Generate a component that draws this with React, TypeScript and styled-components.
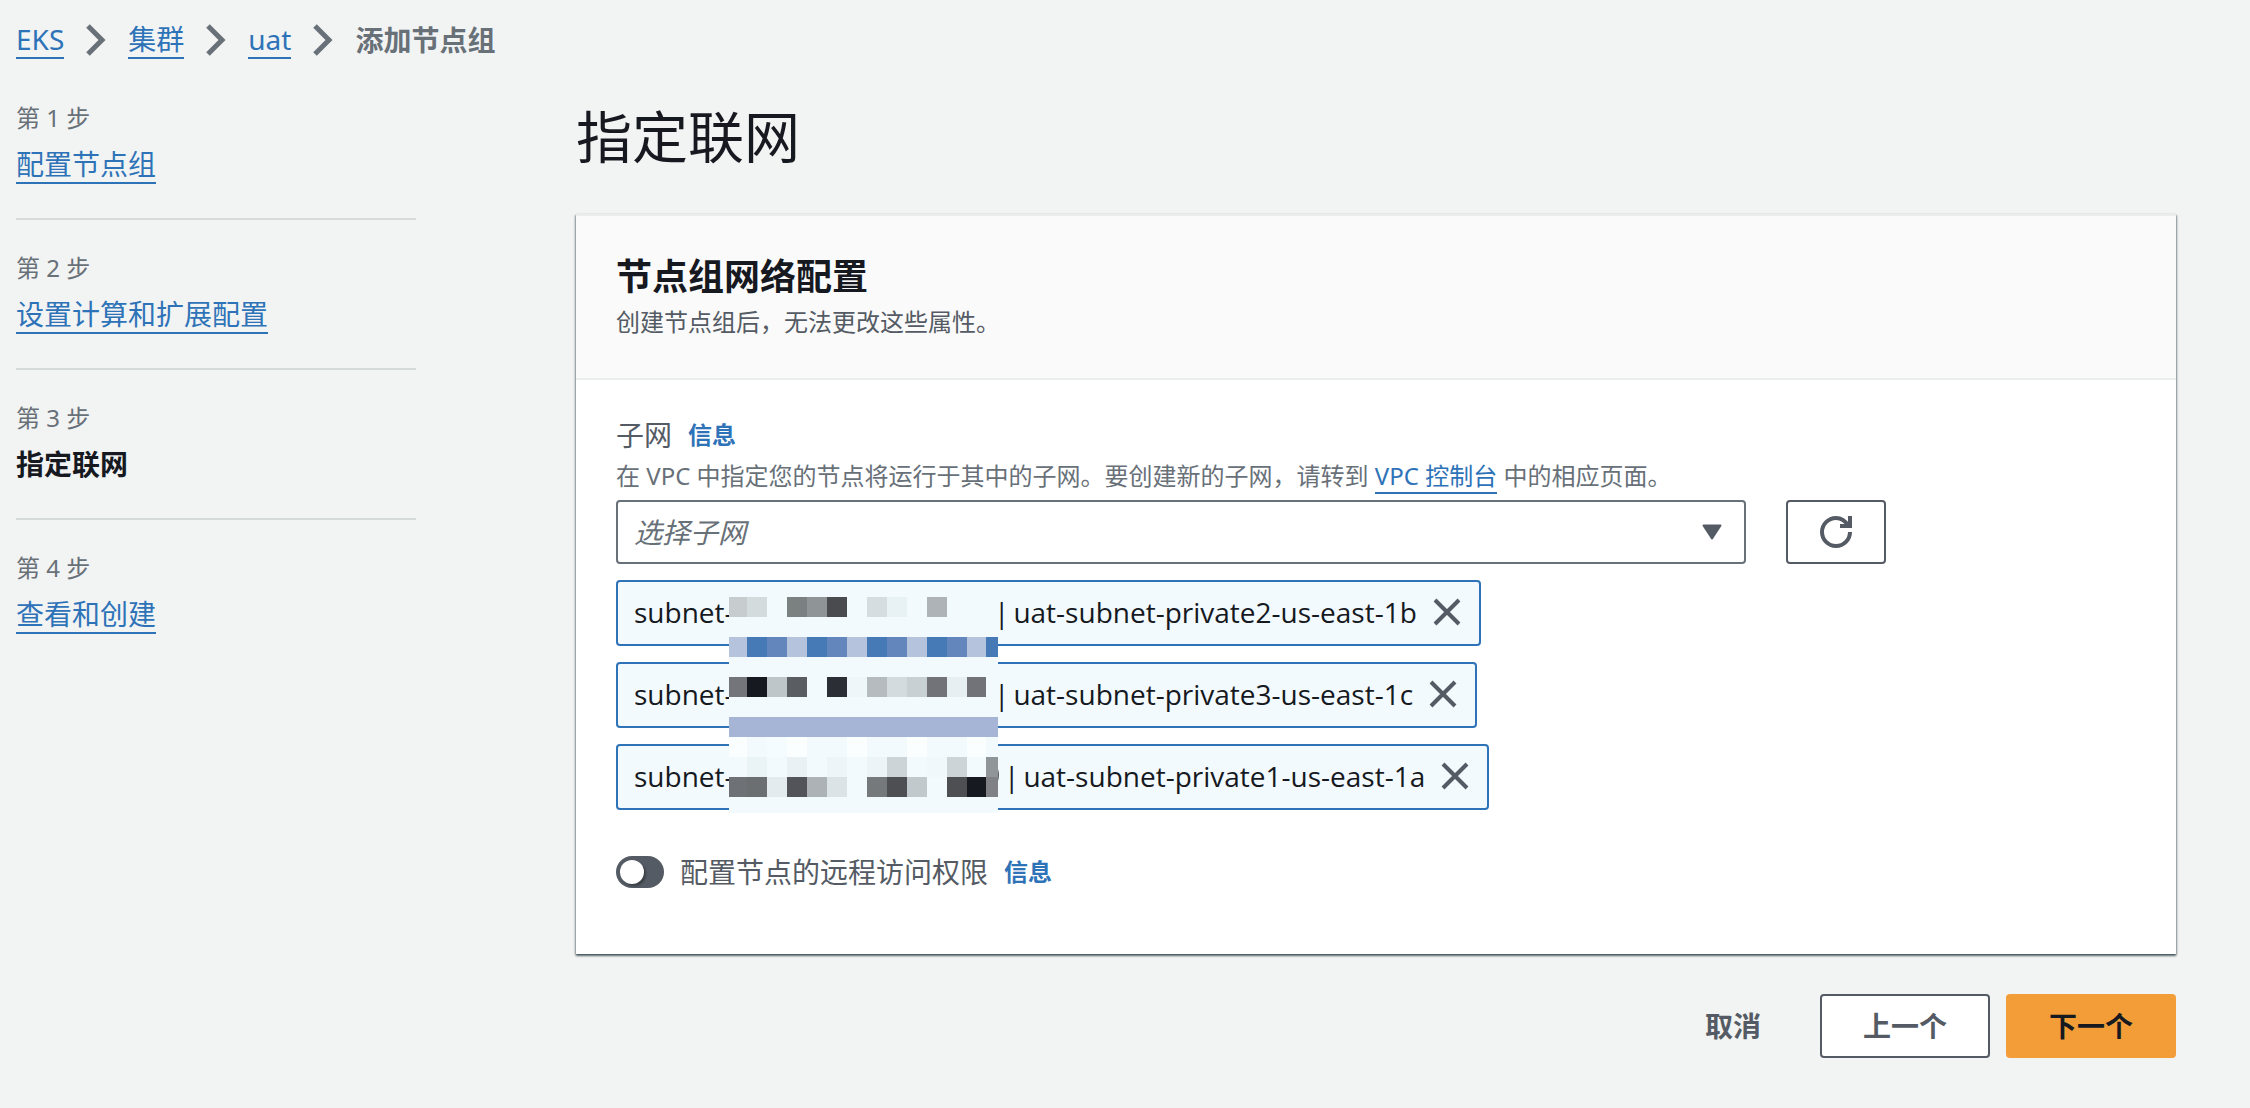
import React, { useState } from "react";
import styled, { createGlobalStyle } from "styled-components";

const GlobalStyle = createGlobalStyle`
  *, *::before, *::after { box-sizing: border-box; }
  body {
    margin: 0;
    background: #f2f3f3;
    color: #16191f;
    font-family: "Noto Sans", "Noto Sans CJK SC", sans-serif;
    font-size: 28px;
    line-height: 44px;
  }
  button, input, select { font: inherit; }
`;

const Page = styled.div`
  min-height: 100vh;
  padding: 18px 74px 48px 16px;
`;

const Link = styled.a`
  display: inline-block;
  color: #2e73b8;
  line-height: 36px;
  text-decoration: none;
  border-bottom: 2px solid #2e73b8;
`;

const Crumbs = styled.ol`
  display: flex;
  align-items: center;
  margin: 0;
  padding: 0;
  list-style: none;
  color: #687078;
`;

const Crumb = styled.li`
  display: flex;
  align-items: center;
  line-height: 44px;
`;

const CurrentCrumb = styled.span`
  font-weight: 700;
`;

const ChevronIcon = styled.svg`
  width: 20px;
  height: 32px;
  margin: 0 22px;
`;

const Layout = styled.div`
  display: grid;
  grid-template-columns: 400px minmax(0, 1fr);
  column-gap: 160px;
  margin-top: 34px;
`;

const Steps = styled.ol`
  margin: 0;
  padding: 0;
  list-style: none;
`;

const Step = styled.li`
  height: 150px;
  padding-top: 4px;
  & + & { border-top: 2px solid #d5dbdb; padding-top: 30px; }
  &:first-child { height: 122px; }
`;

const StepLabel = styled.div`
  color: #687078;
  font-size: 24px;
  line-height: 36px;
  margin-bottom: 6px;
`;

const StepCurrent = styled.div`
  font-weight: 700;
  line-height: 44px;
`;

const Title = styled.h1`
  margin: 0 0 38px;
  font-size: 56px;
  font-weight: 400;
  line-height: 80px;
`;

const Card = styled.section`
  background: #fff;
  border-top: 2px solid #eaeded;
  box-shadow: 0 2px 2px 0 rgba(0, 28, 36, 0.5), 1px 1px 2px 0 rgba(0, 28, 36, 0.3), -1px 1px 2px 0 rgba(0, 28, 36, 0.3);
`;

const CardHeader = styled.header`
  padding: 37px 40px;
  background: #fafafa;
  border-bottom: 2px solid #eaeded;
`;

const CardTitle = styled.h2`
  margin: 0 0 2px;
  font-size: 36px;
  font-weight: 700;
  line-height: 48px;
`;

const Description = styled.p<{ $muted?: boolean }>`
  margin: 0;
  color: ${(p) => (p.$muted ? "#687078" : "#545b64")};
  font-size: 24px;
  line-height: 38px;
  & ${Link} { line-height: 32px; }
`;

const CardBody = styled.div`
  padding: 33px 40px 60px;
`;

const FieldLabel = styled.div`
  display: flex;
  align-items: center;
  gap: 16px;
  color: #545b64;
  line-height: 44px;
`;

const InfoLink = styled.a`
  color: #2e73b8;
  font-size: 24px;
  font-weight: 700;
  text-decoration: none;
`;

const SelectRow = styled.div`
  display: grid;
  grid-template-columns: minmax(0, 1130px) 100px;
  column-gap: 40px;
  margin-top: 5px;
`;

const SelectBox = styled.div`
  position: relative;
`;

const Select = styled.select`
  display: block;
  width: 100%;
  height: 64px;
  padding: 0 60px 0 16px;
  appearance: none;
  color: #687078;
  font-style: italic;
  background: #fff;
  border: 2px solid #687078;
  border-radius: 4px;
`;

const CaretIcon = styled.svg`
  position: absolute;
  top: 24px;
  right: 24px;
  width: 20px;
  height: 16px;
  pointer-events: none;
`;

const Button = styled.button<{ $kind?: "primary" | "link" }>`
  display: flex;
  align-items: center;
  justify-content: center;
  height: 64px;
  padding: 0 41px;
  font-weight: 700;
  color: ${(p) => (p.$kind === "primary" ? "#16191f" : "#545b64")};
  background: ${(p) => (p.$kind === "primary" ? "#f29d38" : p.$kind === "link" ? "transparent" : "#fff")};
  border: 2px solid ${(p) => (p.$kind === "primary" ? "#f29d38" : p.$kind === "link" ? "transparent" : "#545b64")};
  border-radius: 4px;
`;

const IconButton = styled(Button)`
  padding: 0;
`;

const Tokens = styled.ul`
  position: relative;
  display: flex;
  flex-direction: column;
  align-items: flex-start;
  gap: 16px;
  margin: 16px 0 0;
  padding: 0;
  list-style: none;
`;

const Token = styled.li`
  display: flex;
  align-items: center;
  height: 66px;
  padding: 0 16px 2px 16px;
  background: #f2fafd;
  border: 2px solid #2e73b8;
  border-radius: 4px;
  font-family: "Open Sans", "Noto Sans", sans-serif;
  white-space: nowrap;
`;

const TokenPrefix = styled.span`
  width: 96px;
`;

const HiddenId = styled.span<{ $width: number }>`
  width: ${(p) => p.$width}px;
`;

const TokenName = styled.span`
  display: flex;
  gap: 4px;
`;

const Dismiss = styled.button`
  display: flex;
  margin-left: 14px;
  padding: 0;
  background: none;
  border: 0;
`;

const Mosaic = styled.svg`
  position: absolute;
  top: 16px;
  left: 113px;
  width: 271px;
  height: 218px;
`;

const ToggleRow = styled.div`
  display: flex;
  align-items: center;
  gap: 16px;
  margin-top: 40px;
  color: #545b64;
`;

const ToggleLabel = styled.label`
  display: flex;
  align-items: center;
  gap: 16px;
`;

const Toggle = styled.input`
  position: relative;
  appearance: none;
  width: 48px;
  height: 32px;
  margin: 0;
  background: #545b64;
  border-radius: 16px;
  &::before {
    content: "";
    position: absolute;
    top: 4px;
    left: 4px;
    width: 24px;
    height: 24px;
    background: #fff;
    border-radius: 50%;
    box-shadow: 2px 2px 2px rgba(0, 0, 0, 0.3);
  }
  &:checked::before { left: 20px; }
`;

const Actions = styled.div`
  display: flex;
  justify-content: flex-end;
  gap: 16px;
  margin-top: 40px;
`;

const Chevron = () => (
  <ChevronIcon viewBox="0 0 20 32" aria-hidden="true">
    <path d="M2 2l14 14L2 30" fill="none" stroke="#687078" strokeWidth="5" />
  </ChevronIcon>
);

const crumbs = ["EKS", "集群", "uat"];

const steps = ["配置节点组", "设置计算和扩展配置", "指定联网", "查看和创建"];

const subnets = [
  { name: "uat-subnet-private2-us-east-1b", hidden: 264 },
  { name: "uat-subnet-private3-us-east-1c", hidden: 264 },
  { name: "uat-subnet-private1-us-east-1a", hidden: 274 },
];

const cols = [0, 18, 38, 58, 78, 98, 118, 138, 158, 178, 198, 218, 238, 257, 269];
const mosaicRows: { y: number; cells: string[] }[] = [
  { y: 1, cells: ["#c7cccf", "#d3dbdd", "", "#7b8081", "#8f9597", "#4a4b4f", "", "#d5dde0", "#e8f1f4", "", "#adb3b7", "", "", ""] },
  { y: 41, cells: ["#b6c3dd", "#467ab7", "#6387bd", "#b6c3dd", "#467ab7", "#6387bd", "#b6c3dd", "#467ab7", "#6387bd", "#b6c3dd", "#467ab7", "#6387bd", "#b6c3dd", "#467ab7"] },
  { y: 81, cells: ["#73757a", "#16191f", "#bec6c9", "#5a5d61", "", "#2b2e34", "#eef6f9", "#b6bbc0", "#d3dbde", "#c8d0d3", "#717378", "#e7eff2", "#717378", ""] },
  { y: 121, cells: Array(14).fill("#a6b4d5") },
  { y: 141, cells: ["#fafeff", "", "#f4fcff", "#fafeff", "", "", "#fafeff", "", "", "#fafeff", "", "", "#fafeff", ""] },
  { y: 161, cells: ["", "#eaf3f6", "", "#e9f1f4", "", "#eef5f9", "", "#ecf4f7", "#ccd4d8", "", "#f0f8fb", "#ccd4d8", "", "#8f9598"] },
  { y: 181, cells: ["#6e7175", "#6b6f72", "#e3ebee", "#525459", "#adb2b6", "#dbe3e6", "", "#76797c", "#4d4f53", "#c1c9cc", "", "#4d4f53", "#16191f", "#7f8186"] },
];

export default function App() {
  const [remote, setRemote] = useState(false);
  return (
    <Page>
      <GlobalStyle />
      <nav aria-label="Breadcrumb">
        <Crumbs>
          {crumbs.map((c) => (
            <Crumb key={c}>
              <Link href="#">{c}</Link>
              <Chevron />
            </Crumb>
          ))}
          <Crumb>
            <CurrentCrumb>添加节点组</CurrentCrumb>
          </Crumb>
        </Crumbs>
      </nav>
      <Layout>
        <Steps>
          {steps.map((s, i) => (
            <Step key={s}>
              <StepLabel>第 {i + 1} 步</StepLabel>
              {i === 2 ? <StepCurrent>{s}</StepCurrent> : <Link href="#">{s}</Link>}
            </Step>
          ))}
        </Steps>
        <main>
          <Title>指定联网</Title>
          <Card>
            <CardHeader>
              <CardTitle>节点组网络配置</CardTitle>
              <Description>创建节点组后，无法更改这些属性。</Description>
            </CardHeader>
            <CardBody>
              <FieldLabel>
                <label htmlFor="subnet">子网</label>
                <InfoLink href="#">信息</InfoLink>
              </FieldLabel>
              <Description $muted>
                在 VPC 中指定您的节点将运行于其中的子网。要创建新的子网，请转到 <Link href="#">VPC 控制台</Link> 中的相应页面。
              </Description>
              <SelectRow>
                <SelectBox>
                  <Select id="subnet">
                    <option>选择子网</option>
                  </Select>
                  <CaretIcon viewBox="0 0 20 16" aria-hidden="true">
                    <path d="M1.5 1.5h17L10 14.5z" fill="#545b64" stroke="#545b64" strokeWidth="2" strokeLinejoin="round" />
                  </CaretIcon>
                </SelectBox>
                <IconButton type="button" aria-label="刷新">
                  <svg width="32" height="32" viewBox="0 0 32 32" fill="none" stroke="#545b64" strokeWidth="4" aria-hidden="true">
                    <path d="M30 16A14 14 0 1 1 16 2c5.500 0 9.500 3 12.500 8M30 0v10H20" />
                  </svg>
                </IconButton>
              </SelectRow>
              <Tokens>
                {subnets.map((s) => (
                  <Token key={s.name}>
                    <TokenPrefix>subnet-</TokenPrefix>
                    <HiddenId $width={s.hidden} />
                    <TokenName>
                      <span>|</span>
                      <span>{s.name}</span>
                    </TokenName>
                    <Dismiss type="button" aria-label="移除">
                      <svg width="32" height="32" viewBox="0 0 32 32" aria-hidden="true">
                        <path d="M4 4l24 24M28 4L4 28" stroke="#545b64" strokeWidth="4" />
                      </svg>
                    </Dismiss>
                  </Token>
                ))}
                <Mosaic viewBox="0 0 271 218" shapeRendering="crispEdges" aria-hidden="true">
                  <rect x="0" y="0" width="269" height="217" fill="#f2fafd" />
                  {mosaicRows.map((row) =>
                    row.cells.map((fill, i) =>
                      fill ? (
                        <rect key={`${row.y}-${i}`} x={cols[i]} y={row.y} width={cols[i + 1] - cols[i]} height="20" fill={fill} />
                      ) : null
                    )
                  )}
                  <path d="M269 173q2 6 0 12z" fill="#545b64" shapeRendering="auto" />
                </Mosaic>
              </Tokens>
              <ToggleRow>
                <ToggleLabel>
                  <Toggle type="checkbox" role="switch" checked={remote} onChange={(e) => setRemote(e.target.checked)} />
                  配置节点的远程访问权限
                </ToggleLabel>
                <InfoLink href="#">信息</InfoLink>
              </ToggleRow>
            </CardBody>
          </Card>
          <Actions>
            <Button type="button" $kind="link">取消</Button>
            <Button type="button">上一个</Button>
            <Button type="button" $kind="primary">下一个</Button>
          </Actions>
        </main>
      </Layout>
    </Page>
  );
}
